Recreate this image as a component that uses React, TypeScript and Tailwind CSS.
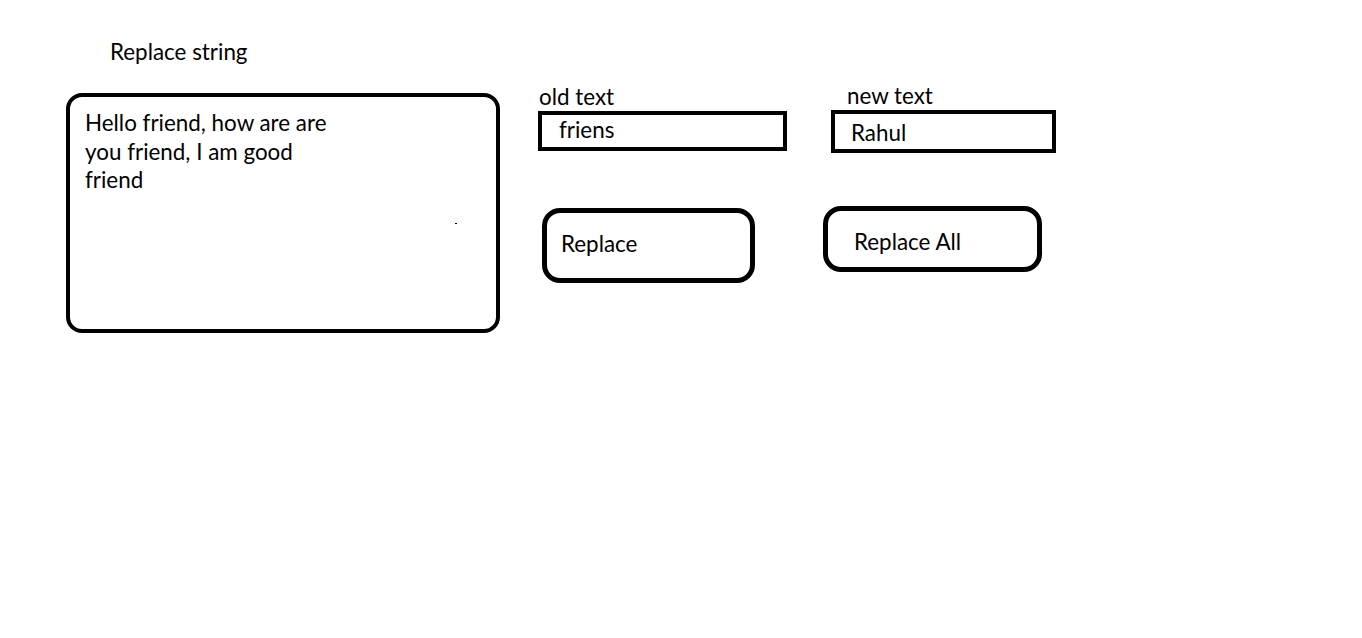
import React from "react";

const font = { fontFamily: "Lato, 'Open Sans', sans-serif" };

export default function App() {
  return (
    <div className="w-[1362px] h-[638px] bg-white text-black text-[22.4px]" style={font}>
      <div className="flex items-start pl-[66px]">
        {/* source text */}
        <div className="flex flex-col w-[434px]">
          <div className="ml-[44px] mt-[38px] leading-[28px]">Replace string</div>
          <div className="relative mt-[27px] h-[240px] border-4 border-black rounded-[16px] pl-[15px] pt-[12px] leading-[28.5px]">
            Hello friend, how are are
            <br />
            you friend, I am good
            <br />
            friend
            <span className="absolute left-[385px] top-[126px] w-[2px] h-[1px] bg-black" />
          </div>
        </div>

        {/* old text */}
        <div className="flex flex-col ml-[38px] w-[249px]">
          <div className="ml-[1px] mt-[83px] leading-[28px]">old text</div>
          <div className="h-[40px] border-4 border-black pl-[17px] leading-[30px]">friens</div>
          <button className="mt-[57px] ml-[4px] w-[213px] h-[75px] border-[5px] border-black rounded-[18px] text-left pl-[14px] pb-[4px]">
            Replace
          </button>
        </div>

        {/* new text */}
        <div className="flex flex-col ml-[36px] w-[233px]">
          <div className="ml-[24px] mt-[82px] leading-[28px]">new text</div>
          <div className="ml-[8px] w-[225px] h-[43px] border-4 border-black pl-[16px] leading-[38px]">Rahul</div>
          <button className="mt-[53px] w-[219px] h-[66px] border-[5px] border-black rounded-[18px] text-left pl-[26px] pt-[6px]">
            Replace All
          </button>
        </div>
      </div>
    </div>
  );
}
